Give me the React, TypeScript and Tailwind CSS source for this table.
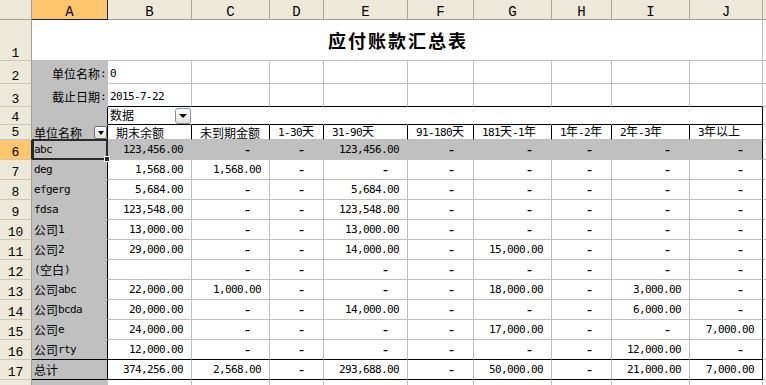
import React from "react";

const CJK = "font-['Noto_Sans_CJK_SC',sans-serif]";
const MONO = "font-['DejaVu_Sans_Mono',monospace] text-[11px] tracking-[-0.62px]";
const DASH = "font-['DejaVu_Sans_Mono',monospace] text-[15px] leading-[14px]";
const HDRFONT = "font-['Liberation_Mono',monospace]";

function Txt({ s }: { s: string }) {
  const parts = s.match(/[\x00-\x7f]+|[^\x00-\x7f]+/g) || [];
  return (
    <>
      {parts.map((p, i) =>
        /^[\x00-\x7f]+$/.test(p) ? (
          <span key={i} className={MONO}>
            {p}
          </span>
        ) : (
          <span key={i} className="text-[12px]">
            {p}
          </span>
        )
      )}
    </>
  );
}

const letters = ["A", "B", "C", "D", "E", "F", "G", "H", "I", "J"];

const data: string[][] = [
  ["abc", "123,456.00", "-", "-", "123,456.00", "-", "-", "-", "-", "-"],
  ["deg", "1,568.00", "1,568.00", "-", "-", "-", "-", "-", "-", "-"],
  ["efgerg", "5,684.00", "-", "-", "5,684.00", "-", "-", "-", "-", "-"],
  ["fdsa", "123,548.00", "-", "-", "123,548.00", "-", "-", "-", "-", "-"],
  ["公司1", "13,000.00", "-", "-", "13,000.00", "-", "-", "-", "-", "-"],
  ["公司2", "29,000.00", "-", "-", "14,000.00", "-", "15,000.00", "-", "-", "-"],
  ["(空白)", "", "-", "-", "-", "-", "-", "-", "-", "-"],
  ["公司abc", "22,000.00", "1,000.00", "-", "-", "-", "18,000.00", "-", "3,000.00", "-"],
  ["公司bcda", "20,000.00", "-", "-", "14,000.00", "-", "-", "-", "6,000.00", "-"],
  ["公司e", "24,000.00", "-", "-", "-", "-", "17,000.00", "-", "-", "7,000.00"],
  ["公司rty", "12,000.00", "-", "-", "-", "-", "-", "-", "12,000.00", "-"],
  ["总计", "374,256.00", "2,568.00", "-", "293,688.00", "-", "50,000.00", "-", "21,000.00", "7,000.00"],
];

const headers5 = ["期末余额", "未到期金额", "1-30天", "31-90天", "91-180天", "181天-1年", "1年-2年", "2年-3年", "3年以上"];

function RowHead({ n, selected }: { n: string; selected?: boolean }) {
  return (
    <div
      className={
        "flex items-end justify-center border-r border-b border-b-[#cbc7b8] text-[13px] leading-none text-black " +
        HDRFONT +
        (selected ? " bg-[#ffc66e] border-r-[#0a246a]" : " bg-[#ece9d8] border-r-[#a29f8f]")
      }
    >
      {n}
    </div>
  );
}

function KCell() {
  return <div className="bg-white border-b border-b-[#c0c0c0]" />;
}

function DropBtn({ small }: { small?: boolean }) {
  return small ? (
    <div className="w-[13px] h-[13px] flex items-center justify-center bg-gradient-to-b from-white to-[#e4e2da] border border-[#6d6d6d] rounded-[2px] shrink-0">
      <div className="w-0 h-0 border-l-[3px] border-r-[3px] border-t-[4px] border-l-transparent border-r-transparent border-t-black" />
    </div>
  ) : (
    <div className="w-[16px] h-[16px] flex items-center justify-center bg-gradient-to-b from-white to-[#e3e1d9] border border-[#7f93b0] rounded-[3px] shrink-0">
      <div className="w-0 h-0 border-l-[4px] border-r-[4px] border-t-[4px] border-l-transparent border-r-transparent border-t-black" />
    </div>
  );
}

export default function App() {
  return (
    <div className={"relative w-[766px] h-[385px] overflow-hidden bg-white text-black " + CJK}>
      <div className="grid grid-cols-[32px_76px_84px_78px_54px_84px_66px_78px_60px_78px_73px_1fr] grid-rows-[20px_41px_23px_23px_18px_15px_repeat(13,20px)] leading-[14px]">
        {/* column headers */}
        <div className="bg-[#ece9d8] border-r border-b border-r-[#a29f8f] border-b-[#a29f8f]" />
        {letters.map((l, i) => (
          <div
            key={l}
            className={
              "flex items-end justify-center border-r border-b text-[14px] leading-none " +
              HDRFONT +
              (i === 0
                ? " bg-[#ffc66e] border-r-[#0a246a] border-b-[#0a246a]"
                : " bg-[#ece9d8] border-r-[#aca899] border-b-[#a29f8f]")
            }
          >
            {l}
          </div>
        ))}
        <div className="bg-[#ece9d8] border-b border-b-[#a29f8f]" />

        {/* row 1 title */}
        <RowHead n="1" />
        <div className="col-span-10 flex items-center justify-center bg-white border-r border-b border-r-[#c0c0c0] border-b-[#c0c0c0]">
          <span className="text-[18px] font-bold tracking-[2px] leading-none pl-[2px]">应付账款汇总表</span>
        </div>
        <KCell />

        {/* row 2 */}
        <RowHead n="2" />
        <div className="flex items-end justify-end pr-[1px] pb-[2px] bg-[#c0c0c0] border-r border-b border-r-[#c0c0c0] border-b-[#c0c0c0] whitespace-nowrap">
          <Txt s="单位名称:" />
        </div>
        <div className="flex items-end pl-[2px] pb-[2px] bg-white border-r border-b border-r-[#c0c0c0] border-b-[#c0c0c0]">
          <Txt s="0" />
        </div>
        {[0, 1, 2, 3, 4, 5, 6, 7].map((i) => (
          <div key={i} className="bg-white border-r border-b border-r-[#c0c0c0] border-b-[#c0c0c0]" />
        ))}
        <KCell />

        {/* row 3 */}
        <RowHead n="3" />
        <div className="flex items-end justify-end pr-[1px] pb-[2px] bg-[#c0c0c0] border-r border-b border-r-[#c0c0c0] border-b-[#c0c0c0] whitespace-nowrap">
          <Txt s="截止日期:" />
        </div>
        <div className="flex items-end pl-[2px] pb-[2px] bg-white border-r border-b border-r-[#c0c0c0] border-b-black">
          <Txt s="2015-7-22" />
        </div>
        {[0, 1, 2, 3, 4, 5, 6, 7].map((i) => (
          <div key={i} className="bg-white border-r border-b border-r-[#c0c0c0] border-b-black" />
        ))}
        <KCell />

        {/* row 4 */}
        <RowHead n="4" />
        <div className="bg-[#c0c0c0] border-r border-b border-r-black border-b-[#c0c0c0]" />
        <div className="flex items-end justify-between pl-[2px] bg-white border-r border-b border-r-white border-b-black">
          <span className="pb-[2px]">
            <Txt s="数据" />
          </span>
          <DropBtn />
        </div>
        {[0, 1, 2, 3, 4, 5, 6].map((i) => (
          <div key={i} className="bg-white border-r border-b border-r-white border-b-black" />
        ))}
        <div className="bg-white border-r border-b border-r-black border-b-black" />
        <KCell />

        {/* row 5 */}
        <RowHead n="5" />
        <div className="flex items-end justify-between pl-[2px] bg-[#c0c0c0] border-r border-b border-r-black border-b-[#c0c0c0] whitespace-nowrap">
          <span className="leading-[13px]">
            <Txt s="单位名称" />
          </span>
          <DropBtn small />
        </div>
        {headers5.map((h, i) => (
          <div
            key={i}
            className="flex items-end pl-[8px] bg-white border-r border-b border-r-black border-b-[#c0c0c0] whitespace-nowrap"
          >
            <span className="leading-[13px]">
              <Txt s={h} />
            </span>
          </div>
        ))}
        <KCell />

        {/* data rows 6-17 */}
        {data.map((row, ri) => {
          const rn = ri + 6;
          const darkBottom = rn === 16 || rn === 17;
          const grayRow = rn === 6;
          return (
            <React.Fragment key={rn}>
              <RowHead n={String(rn)} selected={rn === 6} />
              <div
                className={
                  "flex items-end pl-[2px] pb-[2px] bg-[#c0c0c0] border-r border-b border-r-black whitespace-nowrap " +
                  (darkBottom ? "border-b-black" : "border-b-[#c0c0c0]")
                }
              >
                <Txt s={row[0]} />
              </div>
              {row.slice(1).map((v, ci) => {
                const last = ci === 8;
                const cls =
                  "flex items-end justify-end pb-[2px] border-r border-b whitespace-nowrap " +
                  (grayRow ? "bg-[#c0c0c0] " : "bg-white ") +
                  (last ? "border-r-black " : "border-r-[#c0c0c0] ") +
                  (darkBottom ? "border-b-black " : "border-b-[#c0c0c0] ") +
                  (v === "-" ? "pr-[17px]" : "pr-[8px]");
                return (
                  <div key={ci} className={cls}>
                    {v === "-" ? <span className={DASH}>-</span> : v ? <Txt s={v} /> : null}
                  </div>
                );
              })}
              <KCell />
            </React.Fragment>
          );
        })}

        {/* row 18 (partial, label off-screen) */}
        <RowHead n="" />
        <div className="bg-[#c0c0c0] border-r border-b border-r-[#c0c0c0] border-b-[#c0c0c0]" />
        {[0, 1, 2, 3, 4, 5, 6, 7, 8].map((i) => (
          <div key={i} className="bg-white border-r border-b border-r-[#c0c0c0] border-b-[#c0c0c0]" />
        ))}
        <KCell />
      </div>

      {/* selection on A6 */}
      <div className="absolute left-[32px] top-[139px] w-[76px] h-[21px] border-2 border-[#2a2a2a] pointer-events-none" />
      <div className="absolute left-[104px] top-[156px] w-[6px] h-[6px] bg-[#2a2a2a] border border-white pointer-events-none" />
    </div>
  );
}
